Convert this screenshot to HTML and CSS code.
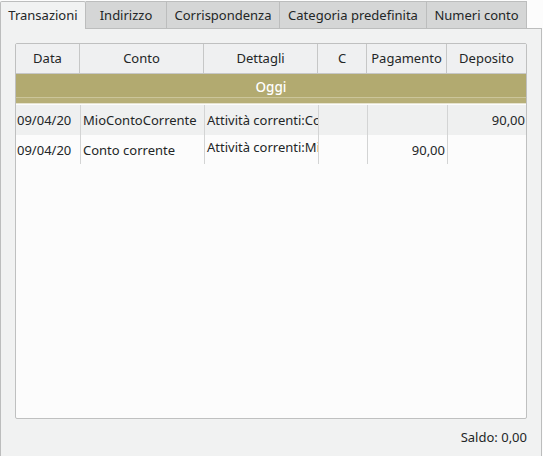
FILE: index.html
```html
<!DOCTYPE html>
<html lang="it">
<head>
<meta charset="utf-8">
<title>Transazioni</title>
<link rel="stylesheet" href="styles.css">
</head>
<body>
<div class="window">
  <div class="tabbar">
    <div class="tab active tab-trans">Transazioni</div>
    <div class="tab tab-ind">Indirizzo</div>
    <div class="tab tab-corr">Corrispondenza</div>
    <div class="tab tab-cat">Categoria predefinita</div>
    <div class="tab tab-num">Numeri conto</div>
  </div>
  <div class="panel">
    <div class="ledger">
      <div class="head">
        <div class="hc">Data</div>
        <div class="hc">Conto</div>
        <div class="hc">Dettagli</div>
        <div class="hc">C</div>
        <div class="hc">Pagamento</div>
        <div class="hc last">Deposito</div>
      </div>
      <div class="group"><span class="group-label">Oggi</span></div>
      <div class="row alt">
        <div class="cell">09/04/20</div>
        <div class="cell">MioContoCorrente</div>
        <div class="cell">Attività correnti:Conto corrente</div>
        <div class="cell"></div>
        <div class="cell num"></div>
        <div class="cell num last">90,00</div>
      </div>
      <div class="row">
        <div class="cell">09/04/20</div>
        <div class="cell">Conto corrente</div>
        <div class="cell raised">Attività correnti:MioContoCorrente</div>
        <div class="cell"></div>
        <div class="cell num">90,00</div>
        <div class="cell num last"></div>
      </div>
    </div>
    <div class="saldo">Saldo: 0,00</div>
  </div>
</div>
</body>
</html>
```
FILE: styles.css
```css
html, body {
  margin: 0;
  padding: 0;
  background: #fcfcfc;
  overflow: hidden;
}
body {
  font-family: "Noto Sans", "DejaVu Sans", sans-serif;
  font-size: 13px;
  color: #232627;
}
.window {
  width: 542px;
}
.tabbar {
  display: flex;
  align-items: flex-end;
  height: 28px;
  padding-top: 1px;
  box-sizing: border-box;
}
.tab {
  height: 27px;
  box-sizing: border-box;
  padding: 0 2px 1px;
  display: flex;
  align-items: center;
  justify-content: center;
  background: #d5d6d6;
  border: 1px solid #bcbdbd;
  border-bottom: none;
  border-left: none;
  white-space: nowrap;
}
.tab-trans { width: 86px; }
.tab-ind { width: 81px; }
.tab-corr { width: 113px; }
.tab-cat { width: 147px; }
.tab-num { width: 100px; }
.tab.active {
  background: #f1f2f2;
  border-left: 1px solid #bcbdbd;
  height: 28px;
  margin-bottom: -1px;
  position: relative;
  z-index: 1;
  border-radius: 2px 2px 0 0;
}
.panel {
  border: 1px solid #bcbdbd;
  background: #f1f2f2;
  padding: 14px 14px 0 14px;
  height: 460px;
  box-sizing: border-box;
}
.ledger {
  height: 376px;
  box-sizing: border-box;
  border: 1px solid #bfc0c0;
  background: #fcfcfc;
  border-radius: 2px;
  overflow: hidden;
}
.head {
  display: grid;
  grid-template-columns: 64px 124px 114px 49px 80px 79px;
  height: 30px;
  background: #eff0f1;
  border-bottom: 1px solid #c6c7c7;
  box-sizing: border-box;
}
.hc {
  display: flex;
  align-items: center;
  justify-content: center;
  border-right: 1px solid #c6c7c7;
  padding-bottom: 1px;
}
.hc.last {
  border-right: none;
}
.group {
  height: 31px;
  box-sizing: border-box;
  background: linear-gradient(to bottom, #b2aa70 0, #b2aa70 23px, #cbc59a 23px, #cbc59a 24px, #b7af78 24px, #b7af78 29px, #e6e3cf 29px, #e6e3cf 30px, #fcfcfc 30px);
  color: #ffffff;
  font-weight: 500;
  font-size: 13.5px;
  text-align: center;
  padding-top: 5px;
  line-height: 17px;
}
.row {
  display: grid;
  grid-template-columns: 65px 124px 114px 49px 80px 78px;
  height: 30px;
  background: #fcfcfc;
}
.row.alt {
  background: #eff0f0;
}
.cell {
  display: flex;
  align-items: center;
  border-right: 1px solid #d3d4d4;
  padding: 0 1px 0 2px;
  white-space: nowrap;
  overflow: hidden;
}
.cell:first-child {
  padding-left: 1px;
}
.cell.num {
  justify-content: flex-end;
  padding-right: 2px;
}
.cell.last {
  border-right: none;
  padding-right: 1px;
}
.cell.raised {
  padding-bottom: 5px;
}
.row:not(.alt) .cell {
  margin-bottom: 1px;
}
.saldo {
  text-align: right;
  padding-top: 9px;
  line-height: 18px;
}
```
